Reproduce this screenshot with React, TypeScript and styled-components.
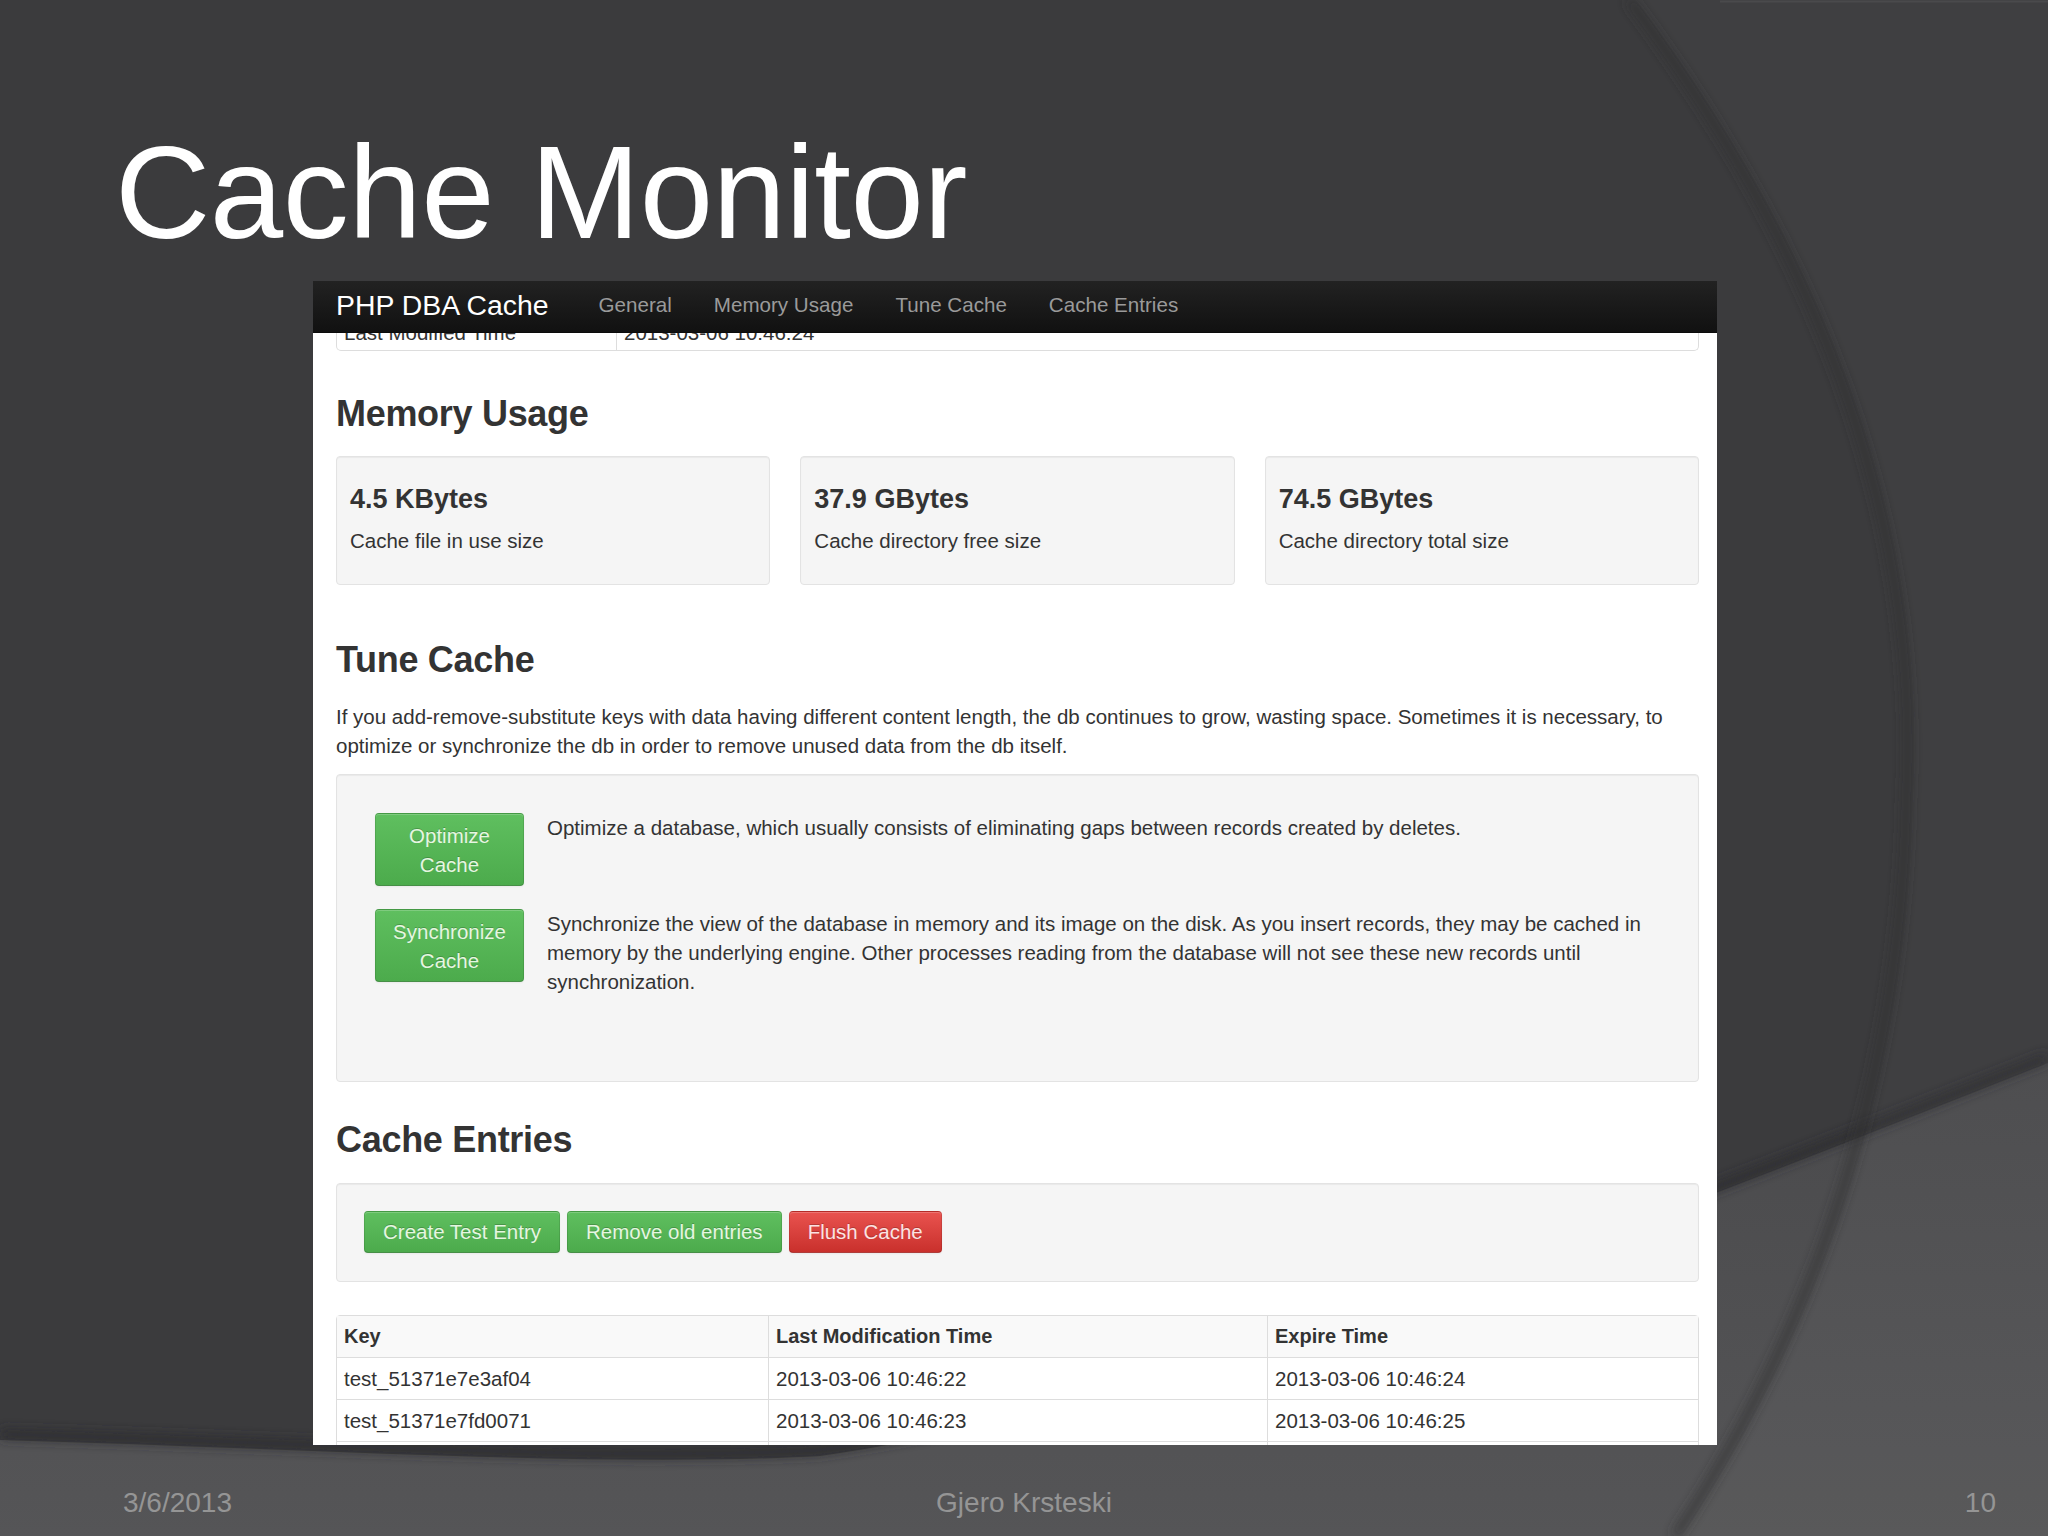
import React from 'react';
import styled, { createGlobalStyle } from 'styled-components';

const GlobalStyle = createGlobalStyle`
  html, body {
    margin: 0;
    padding: 0;
    background: #3b3b3d;
  }
  body {
    font-family: "Liberation Sans", Arial, sans-serif;
  }
`;

const FONT = `"Liberation Sans", Arial, sans-serif`;

const Slide = styled.div`
  position: relative;
  width: 2048px;
  height: 1536px;
  overflow: hidden;
  background: #3b3b3d;
  display: flex;
  flex-direction: column;
`;

const Backdrop = styled.svg`
  position: absolute;
  left: 0;
  top: 0;
  z-index: 0;
`;

const SlideTitle = styled.h1`
  position: relative;
  z-index: 1;
  margin: 127px 0 0 115px;
  font: 400 132px/132px ${FONT};
  color: #fff;
  letter-spacing: -0.5px;
`;

const Shot = styled.div`
  position: relative;
  z-index: 1;
  margin: 22px 0 0 313px;
  width: 1404px;
  height: 1164px;
  background: #fff;
  display: flex;
  flex-direction: column;
  overflow: hidden;
`;

const Navbar = styled.div`
  flex: none;
  box-sizing: border-box;
  height: 52px;
  display: flex;
  align-items: center;
  padding: 0 23px 3px;
  background: linear-gradient(#222, #111);
  border-bottom: 1px solid #0b0b0b;
`;

const Brand = styled.span`
  font: 400 28.4px ${FONT};
  color: #fff;
  margin-right: 29px;
`;

const NavLink = styled.span`
  font: 400 20.6px ${FONT};
  color: #9a9a9a;
  padding: 0 21px;
`;

const Page = styled.div`
  flex: 1;
  overflow: hidden;
  padding: 0 18px 0 23px;
  color: #333;
  font: 400 20.5px/29px ${FONT};
`;

const TailTable = styled.table`
  width: 100%;
  margin-top: -19px;
  border-collapse: separate;
  border-spacing: 0;
  border: 1px solid #ddd;
  border-top: 0;
  border-radius: 0 0 5px 5px;
  table-layout: fixed;
`;

const TailCell = styled.td<{ $w?: number }>`
  height: 36px;
  padding: 0 7px;
  width: ${(p) => (p.$w ? `${p.$w}px` : 'auto')};
  & + & {
    border-left: 1px solid #ddd;
  }
`;

const SectionTitle = styled.h2<{ $top: number }>`
  margin: ${(p) => p.$top}px 0 0;
  font: 700 36px/40px ${FONT};
  color: #333;
  letter-spacing: -0.3px;
`;

const Well = styled.div`
  box-sizing: border-box;
  background: #f5f5f5;
  border: 1px solid #e3e3e3;
  border-radius: 4px;
  box-shadow: inset 0 1px 1px rgba(0, 0, 0, 0.05);
`;

const StatGrid = styled.div`
  margin-top: 22px;
  display: grid;
  grid-template-columns: repeat(3, 1fr);
  gap: 30px;
`;

const StatCard = styled(Well)`
  height: 129px;
  padding: 27px 13px 0;
`;

const StatValue = styled.div`
  font: 700 27px/30px ${FONT};
  color: #333;
`;

const StatLabel = styled.div`
  margin-top: 13px;
  line-height: 28px;
`;

const Lead = styled.p`
  margin: 22px 0 0;
`;

const TuneWell = styled(Well)`
  margin-top: 14px;
  height: 308px;
  padding: 38px 38px 0;
  display: flex;
  flex-direction: column;
  gap: 23px;
`;

const ActionRow = styled.div`
  display: flex;
  align-items: flex-start;
  gap: 23px;
`;

const Button = styled.span<{ $tone?: 'success' | 'danger' }>`
  box-sizing: border-box;
  display: inline-block;
  text-align: center;
  font: 400 20.5px/28px ${FONT};
  border-radius: 4px;
  border: 1px solid rgba(0, 0, 0, 0.1);
  border-bottom-color: rgba(0, 0, 0, 0.25);
  box-shadow: inset 0 1px 0 rgba(255, 255, 255, 0.2), 0 1px 2px rgba(0, 0, 0, 0.05);
  text-shadow: 0 -1px 0 rgba(0, 0, 0, 0.2);
  padding: 6px 18px;
  color: ${(p) => (p.$tone === 'danger' ? '#fbe3e2' : '#e6f6e1')};
  background: ${(p) =>
    p.$tone === 'danger'
      ? 'linear-gradient(#e9534f, #c9302c)'
      : 'linear-gradient(#5fbf5f, #4cab4c)'};
`;

const ActionButton = styled(Button)`
  flex: none;
  width: 149px;
  padding: 7px 0 6px;
  line-height: 29px;
`;

const ActionText = styled.div`
  flex: 1;
`;

const EntriesWell = styled(Well)`
  margin-top: 23px;
  height: 99px;
  padding: 27px;
  display: flex;
  gap: 7px;
  align-items: flex-start;
`;

const DataTable = styled.table`
  margin-top: 33px;
  width: 100%;
  table-layout: fixed;
  border-collapse: separate;
  border-spacing: 0;
  border: 1px solid #ddd;
  border-radius: 4px;
`;

const Th = styled.th<{ $w?: number }>`
  height: 41px;
  padding: 0 7px;
  text-align: left;
  font: 700 20px ${FONT};
  color: #333;
  background: #f9f9f9;
  width: ${(p) => (p.$w ? `${p.$w}px` : 'auto')};
  & + & {
    border-left: 1px solid #ddd;
  }
`;

const Td = styled.td`
  height: 41px;
  padding: 0 7px;
  border-top: 1px solid #ddd;
  font: 400 20.5px ${FONT};
  color: #333;
  & + & {
    border-left: 1px solid #ddd;
  }
`;

const Footer = styled.div`
  position: relative;
  z-index: 1;
  margin-top: 44px;
  display: grid;
  grid-template-columns: 1fr auto 1fr;
  font: 400 28px/28px ${FONT};
  color: #959595;
`;

const FootLeft = styled.span`
  justify-self: start;
  margin-left: 123px;
`;

const FootRight = styled.span`
  justify-self: end;
  margin-right: 52px;
`;

const ARC = 'M1636,0 Q1935,400 1913,800 Q1905,1200 1682,1536';
const BAND = 'M0,1440 C300,1448 600,1468 820,1456 C1200,1400 1600,1240 2048,1063';

const Background = () => (
  <Backdrop width="2048" height="1536" viewBox="0 0 2048 1536">
    <defs>
      <linearGradient id="band" x1="0" y1="0" x2="0" y2="1">
        <stop offset="0" stopColor="#4a4a4c" />
        <stop offset="1" stopColor="#555557" />
      </linearGradient>
      <filter id="soft" x="-10%" y="-10%" width="120%" height="120%">
        <feGaussianBlur stdDeviation="6" />
      </filter>
    </defs>
    <rect width="2048" height="1536" fill="#3b3b3d" />
    <path d={`${BAND} L2048,1536 L0,1536 Z`} fill="url(#band)" />
    <path d={BAND} fill="none" stroke="#2c2c2e" strokeWidth="8" filter="url(#soft)" transform="translate(0,-6)" />
    <path d={`${ARC} L2048,1536 L2048,0 Z`} fill="rgba(255,255,255,0.025)" />
    <path d={ARC} fill="none" stroke="#303032" strokeWidth="6" filter="url(#soft)" transform="translate(-7,0)" />
    <line x1="1720" y1="1.5" x2="2048" y2="1.5" stroke="#4a4a4c" strokeWidth="2" />
  </Backdrop>
);

const stats = [
  { value: '4.5 KBytes', label: 'Cache file in use size' },
  { value: '37.9 GBytes', label: 'Cache directory free size' },
  { value: '74.5 GBytes', label: 'Cache directory total size' },
];

const entries = [
  { key: 'test_51371e7e3af04', modified: '2013-03-06 10:46:22', expires: '2013-03-06 10:46:24' },
  { key: 'test_51371e7fd0071', modified: '2013-03-06 10:46:23', expires: '2013-03-06 10:46:25' },
];

export default function App() {
  return (
    <Slide>
      <GlobalStyle />
      <Background />
      <SlideTitle>Cache Monitor</SlideTitle>

      <Shot>
        <Navbar>
          <Brand>PHP DBA Cache</Brand>
          <NavLink>General</NavLink>
          <NavLink>Memory Usage</NavLink>
          <NavLink>Tune Cache</NavLink>
          <NavLink>Cache Entries</NavLink>
        </Navbar>

        <Page>
          {/* last row of the "General" table, scrolled under the navbar */}
          <TailTable>
            <tbody>
              <tr>
                <TailCell $w={265}>Last Modified Time</TailCell>
                <TailCell>2013-03-06 10:46:24</TailCell>
              </tr>
            </tbody>
          </TailTable>

          <SectionTitle $top={43}>Memory Usage</SectionTitle>
          <StatGrid>
            {stats.map((s) => (
              <StatCard key={s.value}>
                <StatValue>{s.value}</StatValue>
                <StatLabel>{s.label}</StatLabel>
              </StatCard>
            ))}
          </StatGrid>

          <SectionTitle $top={55}>Tune Cache</SectionTitle>
          <Lead>
            If you add-remove-substitute keys with data having different content length, the db continues to grow,
            wasting space. Sometimes it is necessary, to optimize or synchronize the db in order to remove unused data
            from the db itself.
          </Lead>
          <TuneWell>
            <ActionRow>
              <ActionButton $tone="success">
                Optimize
                <br />
                Cache
              </ActionButton>
              <ActionText>
                Optimize a database, which usually consists of eliminating gaps between records created by deletes.
              </ActionText>
            </ActionRow>
            <ActionRow>
              <ActionButton $tone="success">
                Synchronize
                <br />
                Cache
              </ActionButton>
              <ActionText>
                Synchronize the view of the database in memory and its image on the disk. As you insert records, they
                may be cached in memory by the underlying engine. Other processes reading from the database will not
                see these new records until synchronization.
              </ActionText>
            </ActionRow>
          </TuneWell>

          <SectionTitle $top={38}>Cache Entries</SectionTitle>
          <EntriesWell>
            <Button $tone="success">Create Test Entry</Button>
            <Button $tone="success">Remove old entries</Button>
            <Button $tone="danger">Flush Cache</Button>
          </EntriesWell>

          <DataTable>
            <thead>
              <tr>
                <Th $w={417}>Key</Th>
                <Th $w={484}>Last Modification Time</Th>
                <Th>Expire Time</Th>
              </tr>
            </thead>
            <tbody>
              {entries.map((e) => (
                <tr key={e.key}>
                  <Td>{e.key}</Td>
                  <Td>{e.modified}</Td>
                  <Td>{e.expires}</Td>
                </tr>
              ))}
              <tr>
                <Td>&nbsp;</Td>
                <Td>&nbsp;</Td>
                <Td>&nbsp;</Td>
              </tr>
            </tbody>
          </DataTable>
        </Page>
      </Shot>

      <Footer>
        <FootLeft>3/6/2013</FootLeft>
        <span>Gjero Krsteski</span>
        <FootRight>10</FootRight>
      </Footer>
    </Slide>
  );
}
